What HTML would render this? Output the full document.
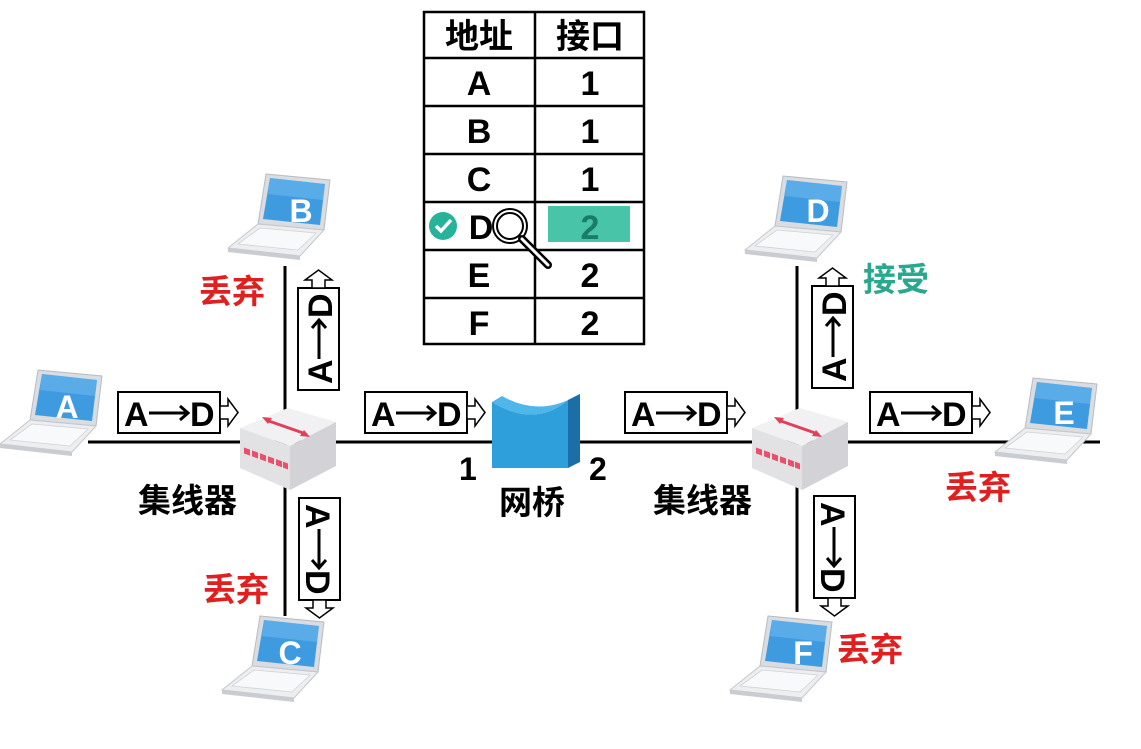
<!DOCTYPE html>
<html><head><meta charset="utf-8"><style>
html,body{margin:0;padding:0;background:#fff;}
svg{display:block;}
text{font-family:"Liberation Sans","Noto Sans CJK SC",sans-serif;font-weight:bold;}
</style></head><body>
<svg width="1141" height="749" viewBox="0 0 1141 749" xmlns="http://www.w3.org/2000/svg">
<defs>
<g id="lap">
 <polygon points="38,4 102,10 96,60 30,54" fill="#d9dde2" stroke="#b8bcc2" stroke-width="1"/>
 <polygon points="42,8 97,14 92,55 35,49" fill="#3f9be0"/>
 <polygon points="42,8 97,14 95,30 40,24" fill="#6db8ee" opacity="0.6"/>
 <polygon points="30,54 96,60 72,86 0,78" fill="#eceef0" stroke="#c4c7cc" stroke-width="1"/>
 <polygon points="32,58 88,63 70,80 10,74" fill="#f8f9fa" stroke="#d0d3d7" stroke-width="0.8"/>
 <polygon points="0,78 72,86 72,90 0,82" fill="#c9ccd1"/>
</g>
<g id="hub">
 <polygon points="0,20 48,0 96,14 50,38" fill="#f1f1f3"/>
 <polygon points="0,20 50,38 50,82 0,60" fill="#e2e2e5"/>
 <polygon points="50,38 96,14 96,58 50,82" fill="#d3d3d7"/>
 <line x1="26" y1="12" x2="66" y2="26" stroke="#e0405a" stroke-width="3"/>
 <polygon points="22,9 32,10 28,16" fill="#e0405a"/>
 <polygon points="70,29 60,28 64,22" fill="#e0405a"/>
 <g fill="#e8506a"><rect x="4" y="40" width="6" height="6" transform="skewY(20) translate(0,-2)"/><rect x="12" y="43" width="6" height="6" transform="skewY(20) translate(0,-5)"/><rect x="20" y="46" width="6" height="6" transform="skewY(20) translate(0,-8)"/><rect x="28" y="49" width="6" height="6" transform="skewY(20) translate(0,-11)"/><rect x="36" y="52" width="6" height="6" transform="skewY(20) translate(0,-14)"/><rect x="43" y="55" width="5" height="6" transform="skewY(20) translate(0,-17)"/></g>
</g>
<g id="harr">
 <rect x="0" y="0" width="102" height="41" fill="#fff" stroke="#000" stroke-width="2"/>
 <polygon points="102,14 110,14 110,7 120,20.5 110,34 110,27 102,27" fill="#fff" stroke="#000" stroke-width="1.5"/>
 <text x="6" y="34" font-size="34">A</text>
 <text x="72" y="34" font-size="34">D</text>
 <line x1="31" y1="21" x2="69" y2="21" stroke="#000" stroke-width="3"/>
 <polyline points="62,14 70,21 62,28" fill="none" stroke="#000" stroke-width="3"/>
</g>
</defs>

<line x1="88" y1="442" x2="1100" y2="442" stroke="#000" stroke-width="3"/>
<line x1="285" y1="266" x2="285" y2="616" stroke="#000" stroke-width="3"/>
<line x1="797" y1="266" x2="797" y2="612" stroke="#000" stroke-width="3"/>

<g stroke="#000" stroke-width="2.5" fill="none">
 <rect x="424" y="12" width="220" height="332"/>
 <line x1="535" y1="12" x2="535" y2="344"/>
 <line x1="424" y1="58" x2="644" y2="58"/>
 <line x1="424" y1="106" x2="644" y2="106"/>
 <line x1="424" y1="154" x2="644" y2="154"/>
 <line x1="424" y1="202" x2="644" y2="202"/>
 <line x1="424" y1="250" x2="644" y2="250"/>
 <line x1="424" y1="298" x2="644" y2="298"/>
</g>
<rect x="548" y="206" width="82" height="36" fill="#48c4a8"/>
<g font-size="34" text-anchor="middle">
 <text x="479" y="48">地址</text><text x="590" y="48">接口</text>
 <text x="479" y="95">A</text><text x="590" y="95">1</text>
 <text x="479" y="143">B</text><text x="590" y="143">1</text>
 <text x="479" y="191">C</text><text x="590" y="191">1</text>
 <text x="481" y="239">D</text><text x="590" y="239" fill="#1a7d69">2</text>
 <text x="479" y="287">E</text><text x="590" y="287">2</text>
 <text x="479" y="335">F</text><text x="590" y="335">2</text>
</g>
<circle cx="443" cy="226" r="14" fill="#27b39a"/>
<polyline points="436,226 441,231 451,220" fill="none" stroke="#fff" stroke-width="3.5"/>
<circle cx="510" cy="226" r="15" fill="none" stroke="#000" stroke-width="6"/>
<circle cx="510" cy="226" r="15" fill="none" stroke="#fff" stroke-width="2"/>
<line x1="522" y1="239" x2="548" y2="265" stroke="#000" stroke-width="8" stroke-linecap="round"/>
<line x1="522" y1="239" x2="548" y2="265" stroke="#fff" stroke-width="3" stroke-linecap="round"/>

<use href="#lap" x="0" y="366"/><text x="67" y="418" font-size="32" fill="#fff" text-anchor="middle">A</text>
<use href="#lap" x="228" y="170"/><text x="301" y="222" font-size="32" fill="#fff" text-anchor="middle">B</text>
<use href="#lap" x="222" y="612"/><text x="290" y="664" font-size="32" fill="#fff" text-anchor="middle">C</text>
<use href="#lap" x="745" y="172"/><text x="818" y="222" font-size="32" fill="#fff" text-anchor="middle">D</text>
<use href="#lap" x="995" y="374"/><text x="1064" y="424" font-size="32" fill="#fff" text-anchor="middle">E</text>
<use href="#lap" x="730" y="612"/><text x="803" y="664" font-size="32" fill="#fff" text-anchor="middle">F</text>

<use href="#hub" x="240" y="408"/>
<use href="#hub" x="752" y="408"/>

<path d="M492,402 Q535,428 568,400 L568,468 L492,468 Z" fill="#2f9fdc"/>
<path d="M492,402 Q535,428 568,400 L580,394 Q540,418 502,396 Z" fill="#4fb6ea"/>
<path d="M568,400 L580,394 L580,462 L568,468 Z" fill="#1b6ea6"/>

<use href="#harr" x="118" y="392"/>
<use href="#harr" x="365" y="392"/>
<use href="#harr" x="625" y="392"/>
<use href="#harr" x="870" y="392"/>

<g transform="translate(298,390) rotate(-90)"><use href="#harr"/></g>
<g transform="translate(812,388) rotate(-90)"><use href="#harr"/></g>
<g transform="translate(340,498) rotate(90)"><use href="#harr"/></g>
<g transform="translate(855,496) rotate(90)"><use href="#harr"/></g>

<g font-size="33">
 <text x="138" y="512">集线器</text>
 <text x="653" y="512">集线器</text>
 <text x="499" y="514">网桥</text>
 <text x="459" y="480" font-size="32">1</text>
 <text x="589" y="480" font-size="32">2</text>
 <text x="199" y="303" fill="#e02020">丢弃</text>
 <text x="203" y="601" fill="#e02020">丢弃</text>
 <text x="945" y="499" fill="#e02020">丢弃</text>
 <text x="837" y="661" fill="#e02020">丢弃</text>
 <text x="863" y="291" fill="#27a88f">接受</text>
</g>
</svg>
</body></html>
